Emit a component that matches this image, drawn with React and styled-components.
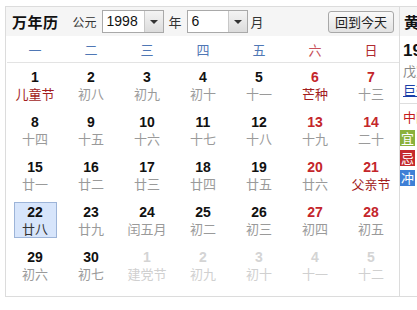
import React from 'react';
import styled, { createGlobalStyle } from 'styled-components';

const GlobalStyle = createGlobalStyle`
	html, body {
		margin: 0;
		padding: 0;
		overflow: hidden;
		background: #fff;
	}
	body {
		font-family: "Liberation Sans", "Noto Sans CJK SC", sans-serif;
	}
`;

const Page = styled.div`
	padding: 6px 0 0 5px;
	width: 620px;
`;

const Widget = styled.div`
	display: flex;
	border: 1px solid #dcdcdc;
	height: 291px;
	box-sizing: border-box;
`;

const Calendar = styled.div`
	width: 393px;
	padding-left: 1px;
	box-sizing: border-box;
	flex-shrink: 0;
`;

const Toolbar = styled.div`
	display: flex;
	align-items: center;
	height: 29px;
	margin-left: -1px;
	padding: 0 5px 0 6px;
	background: #f5f5f5;
	font-family: "Noto Sans CJK SC", sans-serif;
	font-size: 12px;
	color: #333;
`;

const Title = styled.span`
	font-size: 15px;
	font-weight: bold;
	color: #111;
	margin-right: 14px;
	letter-spacing: 0.5px;
`;

const Label = styled.span`
	margin: ${p => p.$m || '0 5px 0 0'};
	font-size: ${p => p.$size || '13px'};
`;

const Select = styled.div`
	display: flex;
	width: ${p => p.$w}px;
	height: 23px;
	box-sizing: border-box;
	border: 1px solid #a9a9a9;
	background: #fff;
	margin-right: 5px;
`;

const SelectValue = styled.span`
	flex: 1;
	font-family: "Liberation Sans", sans-serif;
	font-size: 14px;
	line-height: 21px;
	padding-left: 4px;
	color: #111;
`;

const SelectArrow = styled.span`
	width: 18px;
	border-left: 1px solid #c8c8c8;
	background: linear-gradient(#f4f4f4, #dcdcdc);
	display: flex;
	align-items: center;
	justify-content: center;
	&::after {
		content: '';
		border-left: 4px solid transparent;
		border-right: 4px solid transparent;
		border-top: 4px solid #333;
	}
`;

const TodayButton = styled.button`
	margin-left: auto;
	height: 22px;
	width: 66px;
	padding: 0;
	border: 1px solid #a8a8a8;
	border-radius: 3px;
	background: linear-gradient(#fafafa, #e2e2e2);
	font-family: "Noto Sans CJK SC", sans-serif;
	font-size: 13px;
	color: #222;
`;

const WeekRow = styled.div`
	display: grid;
	grid-template-columns: repeat(7, 56px);
	height: 25px;
	border-bottom: 1px solid #e3e3e3;
	margin-right: -1px;
	align-items: center;
	padding-top: 1px;
`;

const WeekDay = styled.span`
	text-align: center;
	font-family: "Noto Sans CJK SC", sans-serif;
	font-size: 13px;
	color: ${p => (p.$tone === 'sat' ? '#c8505a' : p.$tone === 'sun' ? '#b02a30' : '#4f77b5')};
`;

const Grid = styled.div`
	display: grid;
	grid-template-columns: repeat(7, 56px);
	grid-auto-rows: 45px;
`;

const Cell = styled.div`
	display: flex;
	justify-content: center;
	padding-top: 4px;
`;

const DayBox = styled.div`
	width: 43px;
	height: 36px;
	box-sizing: border-box;
	padding-top: 1px;
	border: 1px solid ${p => (p.$active ? '#9db4d8' : 'transparent')};
	background: ${p => (p.$active ? '#d7e5fb' : 'transparent')};
	text-align: center;
`;

const DayNum = styled.div`
	font-family: "Liberation Sans", sans-serif;
	font-weight: bold;
	font-size: 14px;
	line-height: 16px;
	color: ${p => (p.$muted ? '#d4d4d4' : p.$red ? '#c4262b' : '#111')};
`;

const Lunar = styled.div`
	font-family: "Noto Sans CJK SC", sans-serif;
	font-size: 13px;
	line-height: 17px;
	white-space: nowrap;
	color: ${p => (p.$muted ? '#d0d0d0' : p.$fest ? '#a21d1d' : p.$active ? '#333' : '#9a9a9a')};
`;

const Almanac = styled.div`
	width: 200px;
	border-left: 1px solid #dcdcdc;
	font-family: "Noto Sans CJK SC", sans-serif;
	font-size: 13px;
	white-space: nowrap;
`;

const AlmanacHead = styled.div`
	height: 29px;
	line-height: 29px;
	padding-left: 4px;
	background: #f5f5f5;
	font-size: 15px;
	font-weight: bold;
	color: #111;
`;

const AlmanacTop = styled.div`
	padding: 4px 0 4px 3px;
	border-bottom: 1px solid #dedede;
`;

const BigDate = styled.div`
	font-family: "Liberation Sans", sans-serif;
	font-weight: bold;
	font-size: 17px;
	line-height: 21px;
	color: #111;
`;

const InfoLine = styled.div`
	line-height: 19px;
	color: ${p => p.$color || '#888'};
	text-decoration: ${p => (p.$link ? 'underline' : 'none')};
`;

const AlmanacBody = styled.div`
	padding: 4px 0 0 0;
	display: flex;
	flex-direction: column;
	gap: 4px;
`;

const RedLine = styled.div`
	padding-left: 3px;
	line-height: 18px;
	color: #c41a1a;
`;

const TagLine = styled.div`
	display: flex;
	align-items: center;
	gap: 4px;
	line-height: 16px;
	color: #555;
`;

const Tag = styled.span`
	display: inline-block;
	width: 15px;
	height: 16px;
	line-height: 16px;
	text-align: center;
	color: #fff;
	font-size: 13px;
	background: ${p => p.$bg};
`;

const weekDays = [
	['一', ''], ['二', ''], ['三', ''], ['四', ''], ['五', ''], ['六', 'sat'], ['日', 'sun'],
];

const days = [
	[1, '儿童节', 'fest'], [2, '初八'], [3, '初九'], [4, '初十'], [5, '十一'], [6, '芒种', 'fest'], [7, '十三'],
	[8, '十四'], [9, '十五'], [10, '十六'], [11, '十七'], [12, '十八'], [13, '十九'], [14, '二十'],
	[15, '廿一'], [16, '廿二'], [17, '廿三'], [18, '廿四'], [19, '廿五'], [20, '廿六'], [21, '父亲节', 'fest'],
	[22, '廿八', 'active'], [23, '廿九'], [24, '闰五月'], [25, '初二'], [26, '初三'], [27, '初四'], [28, '初五'],
	[29, '初六'], [30, '初七'], [1, '建党节', 'muted'], [2, '初九', 'muted'], [3, '初十', 'muted'], [4, '十一', 'muted'], [5, '十二', 'muted'],
];

function App() {
	return (
		<Page>
			<GlobalStyle />
			<Widget>
				<Calendar>
					<Toolbar>
						<Title>万年历</Title>
						<Label $size="12px">公元</Label>
						<Select $w={62}>
							<SelectValue>1998</SelectValue>
							<SelectArrow />
						</Select>
						<Label>年</Label>
						<Select $w={61}>
							<SelectValue>6</SelectValue>
							<SelectArrow />
						</Select>
						<Label $m="0 0 0 -2px">月</Label>
						<TodayButton>回到今天</TodayButton>
					</Toolbar>
					<WeekRow>
						{weekDays.map(([d, tone]) => (
							<WeekDay key={d} $tone={tone}>{d}</WeekDay>
						))}
					</WeekRow>
					<Grid>
						{days.map(([n, lunar, kind], i) => {
							const col = i % 7;
							const muted = kind === 'muted';
							return (
								<Cell key={i}>
									<DayBox $active={kind === 'active'}>
										<DayNum $muted={muted} $red={col >= 5}>{n}</DayNum>
										<Lunar $muted={muted} $fest={kind === 'fest'} $active={kind === 'active'}>{lunar}</Lunar>
									</DayBox>
								</Cell>
							);
						})}
					</Grid>
				</Calendar>
				<Almanac>
					<AlmanacHead>黄历</AlmanacHead>
					<AlmanacTop>
						<BigDate>1998年6月22日</BigDate>
						<InfoLine>戊寅年 戊午月 壬子日</InfoLine>
						<InfoLine $color="#1a3fa8" $link>巨蟹座</InfoLine>
					</AlmanacTop>
					<AlmanacBody>
						<RedLine>中国抗日战争</RedLine>
						<TagLine><Tag $bg="#8bb13b">宜</Tag>祭祀 祈福</TagLine>
						<TagLine><Tag $bg="#c42a2e">忌</Tag>动土 破土</TagLine>
						<TagLine><Tag $bg="#3e7fd6">冲</Tag>马日冲</TagLine>
					</AlmanacBody>
				</Almanac>
			</Widget>
		</Page>
	);
}

export default App;
